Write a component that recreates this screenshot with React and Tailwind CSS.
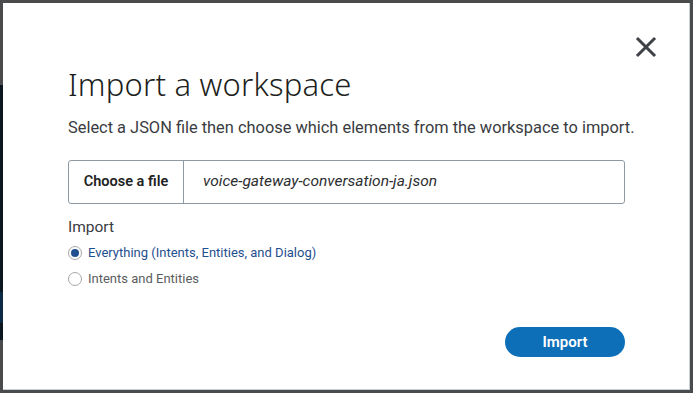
export default function App() {
  return (
    <div className="w-[693px] h-[393px] bg-[#4a4b4c] flex pt-[3px] overflow-hidden" style={{ fontFamily: 'Roboto, "Noto Sans", sans-serif' }}>
      {/* page behind the overlay, peeking out on the left */}
      <div className="w-[3px] flex flex-col">
        <div className="h-[82px] bg-[#4a4b4c]" />
        <div className="h-[207px] bg-[#0b1620]" />
        <div className="h-[31px] bg-[#0d2a44]" />
        <div className="h-[17px] bg-[#0b1620]" />
        <div className="flex-1 bg-[#4a4b4c]" />
      </div>

      <div className="w-[687px] h-[387px] bg-white border-r border-b border-[#c9ced1] relative pl-[65px] pr-[64px] pt-[61px]">
        <button className="absolute right-[31px] top-[32px] w-[24px] h-[24px] flex items-center justify-center text-[#3e4246]">
          <svg width="24" height="24" viewBox="0 0 24 24" fill="none" stroke="currentColor" strokeWidth="3" strokeLinecap="square">
            <path d="M4 4 L20 20 M20 4 L4 20" />
          </svg>
        </button>

        <h1 className="text-[31px] leading-[40px] font-light text-[#1d1f21] tracking-[0.2px]" style={{ fontFamily: '"Noto Sans", sans-serif' }}>Import a workspace</h1>
        <p className="mt-[13px] text-[16.4px] leading-[22px] text-[#3a3c3f] whitespace-nowrap">Select a JSON file then choose which elements from the workspace to import.</p>

        <div className="mt-[21px] h-[44px] w-[557px] flex border border-[#8d9aa3] rounded-[3px]">
          <div className="w-[115px] border-r border-[#8d9aa3] flex items-center justify-center text-[14.5px] font-semibold text-[#222]">Choose a file</div>
          <div className="flex items-center pl-[19px] text-[15.5px] italic text-[#2c2e30]">voice-gateway-conversation-ja.json</div>
        </div>

        <div className="mt-[12px] text-[15.5px] leading-[22px] text-[#3a3c3f]">Import</div>

        <div className="mt-[5px] flex flex-col gap-[6px]">
          <label className="flex items-center gap-[6px] text-[13px] leading-[20px] text-[#1f4f8f]">
            <span className="w-[14px] h-[14px] rounded-full border-[1.5px] border-[#a3a7ab] flex items-center justify-center">
              <span className="w-[8px] h-[8px] rounded-full bg-[#1f4f8f]" />
            </span>
            Everything (Intents, Entities, and Dialog)
          </label>
          <label className="flex items-center gap-[6px] text-[13px] leading-[20px] text-[#5a5d60]">
            <span className="w-[14px] h-[14px] rounded-full border-[1.5px] border-[#a3a7ab]" />
            Intents and Entities
          </label>
        </div>

        <div className="absolute right-[64px] bottom-[32px]">
          <button className="w-[120px] h-[30px] rounded-full bg-[#0e6fb9] text-white text-[15px] font-semibold">Import</button>
        </div>
      </div>
    </div>
  )
}
